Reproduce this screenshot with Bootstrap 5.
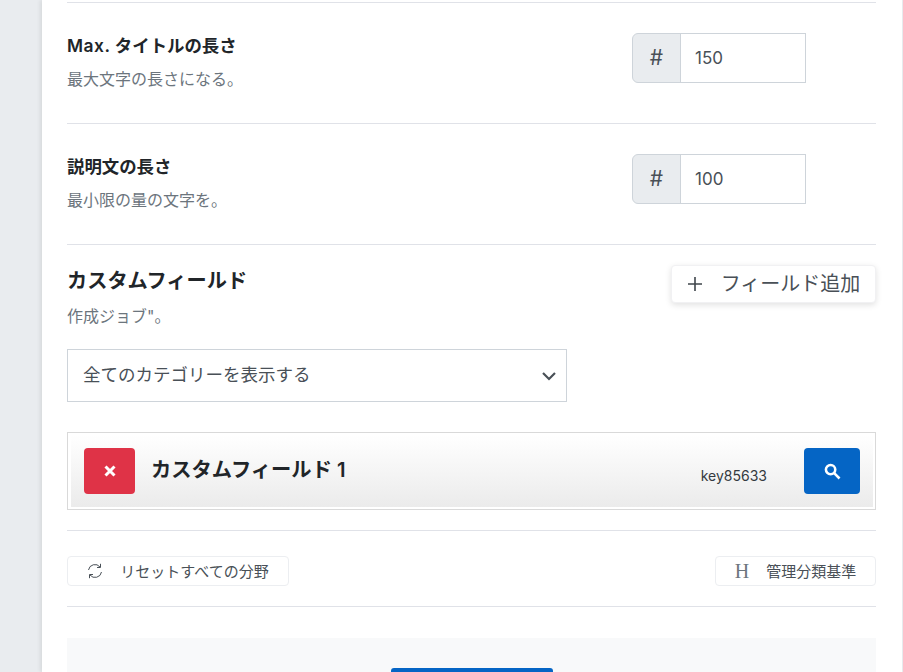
<!DOCTYPE html>
<html lang="ja"><head><meta charset="utf-8"><title>設定</title>
<link href="https://cdn.jsdelivr.net/npm/bootstrap@5.3.0/dist/css/bootstrap.min.css" rel="stylesheet">
<style>
html,body{height:672px;overflow:hidden}
body{background:#e9ecef;font-family:"Inter","Noto Sans CJK JP",sans-serif;color:#212529}
.sheet{margin-left:42px;width:860px;height:672px;background:#fff;padding:2px 26px 0 25px;box-shadow:-2px 0 4px rgba(0,0,0,.08);overflow:hidden}
.rule{height:1px;background:#e0e2e8}
.setrow{height:120px;padding-top:31px}
.lefty{width:565px}
.ttl{font-size:17.4px;font-weight:600;line-height:24px;margin-bottom:11px}
.wide{letter-spacing:.5px}
.sub{font-size:16px;line-height:21px;color:#6c757d;margin:0}
.numgrp{width:174px;height:50px;margin-top:-1px}
.numgrp .input-group-text{width:49px;justify-content:center;font-size:21px;padding:0;background:#e9ecef;border-color:#ced4da;color:#495057;border-radius:6px 0 0 6px}
.numgrp .form-control{font-size:17px;padding:0 14px;border-color:#ced4da;border-radius:0;color:#495057;height:50px}
.cfsec{height:104px;padding-top:20px}
.cfcopy{padding-top:2px}
.cfttl{font-size:20.2px;font-weight:600;line-height:27px;margin-bottom:12px}
.addbtn{width:205px;height:38px;background:#fff;border:1px solid #f1f1f3;border-radius:4px;box-shadow:0 2px 6px rgba(0,0,0,.12);font-size:20px;color:#495057;padding:0;gap:18px}
.catsel{width:500px;height:53px;font-size:17.5px;color:#495057;border-color:#ced4da;border-radius:0;padding:0 15px;background-position:right 10px center;background-size:14px 10px;background-image:url("data:image/svg+xml,%3csvg xmlns='http://www.w3.org/2000/svg' viewBox='0 0 14 10'%3e%3cpath fill='none' stroke='%23495057' stroke-width='2.2' d='M1 2l6 6 6-6'/%3e%3c/svg%3e")}
.fieldbox{height:78px;margin-top:30px;border:1px solid #d9d9d9;padding:2px 2px 2px 3px}
.fieldin{height:72px;background:linear-gradient(#fff,#ebebeb);padding:13px 13px 0 13px}
.sqbtn{height:46px;border:0;border-radius:4px;padding:0;color:#fff}
.delbtn{width:51px;background:#df3347}
.findbtn{width:56px;background:#0565c5}
.fname{font-size:20.3px;font-weight:600;line-height:27px;margin:8px 0 0 16px}
.fkey{font-size:14px;line-height:20px;color:#343a40;margin:18px 37px 0 0}
.gap20{height:20px}
.toolrow{height:75px;padding-top:25px}
.ghost{height:30px;background:#fff;border:1px solid #eceef1;border-radius:4px;font-size:15px;color:#495057;padding:2px 0 0}
.ghost1{width:222px;gap:17px}.ghost2{width:161px;gap:17px}
.ghost1 svg{margin-top:-2px}
.serifh{font-family:"Liberation Serif",serif;font-size:20px;line-height:1;font-weight:400;color:#6c757d;margin-top:-3px}
.footbox{height:60px;margin-top:31px;background:#f8f9fa;padding-top:30px}
.savebtn{width:162px;height:40px;background:#0565c5;border:0;border-radius:3px;color:#fff}
</style></head>
<body>
<div class="sheet">
<div class="rule"></div>
<div class="setrow d-flex">
 <div class="lefty"><div class="ttl"><span class="wide">Max.</span> タイトルの長さ</div><p class="sub">最大文字の長さになる。</p></div>
 <div class="input-group numgrp flex-nowrap"><span class="input-group-text">#</span><input class="form-control" value="150"></div>
</div>
<div class="rule"></div>
<div class="setrow d-flex">
 <div class="lefty"><div class="ttl">説明文の長さ</div><p class="sub">最小限の量の文字を。</p></div>
 <div class="input-group numgrp flex-nowrap"><span class="input-group-text">#</span><input class="form-control" value="100"></div>
</div>
<div class="rule"></div>
<div class="cfsec d-flex justify-content-between">
 <div class="cfcopy"><div class="cfttl">カスタムフィールド</div><p class="sub">作成ジョブ"。</p></div>
 <button class="btn addbtn d-flex align-items-center justify-content-center" type="button">
  <svg width="16" height="16" viewBox="0 0 16 16" fill="none" stroke="#3f454b" stroke-width="1.6"><path d="M8 1v14M1 8h14"/></svg><span>フィールド追加</span></button>
</div>
<select class="form-select catsel"><option>全てのカテゴリーを表示する</option></select>
<div class="fieldbox"><div class="fieldin d-flex align-items-start">
 <button class="btn sqbtn delbtn d-flex align-items-center justify-content-center" type="button" aria-label="削除"><svg width="12" height="12" viewBox="0 0 12 12" stroke="#fff" stroke-width="3"><path d="M1.5 1.5l9 9M10.5 1.5l-9 9"/></svg></button>
 <div class="fname flex-grow-1">カスタムフィールド 1</div>
 <div class="fkey">key85633</div>
 <button class="btn sqbtn findbtn d-flex align-items-center justify-content-center" type="button" aria-label="検索"><svg width="17" height="17" viewBox="0 0 16 16" fill="none" stroke="#fff"><circle cx="6.2" cy="6.2" r="4.4" stroke-width="2.4"/><path d="M9.6 9.6l5 5" stroke-width="2.4"/></svg></button>
</div></div>
<div class="gap20"></div>
<div class="rule"></div>
<div class="toolrow d-flex justify-content-between">
 <button class="btn ghost ghost1 d-flex align-items-center justify-content-center" type="button">
  <svg width="16" height="16" viewBox="0 0 16 16" fill="none" stroke="#495057" stroke-width="1"><path d="M1.5 7A6.5 6.5 0 0 1 13 4M14.5 9A6.5 6.5 0 0 1 3 12"/><path d="M13.5 .8V4.5H10M2.5 15.2V11.5H6"/></svg><span>リセットすべての分野</span></button>
 <button class="btn ghost ghost2 d-flex align-items-center justify-content-center" type="button"><span class="serifh">H</span><span>管理分類基準</span></button>
</div>
<div class="rule"></div>
<div class="footbox text-center"><button class="btn savebtn" type="button"></button></div>
</div>
<script src="https://cdn.jsdelivr.net/npm/bootstrap@5.3.0/dist/js/bootstrap.bundle.min.js"></script>
</body></html>
